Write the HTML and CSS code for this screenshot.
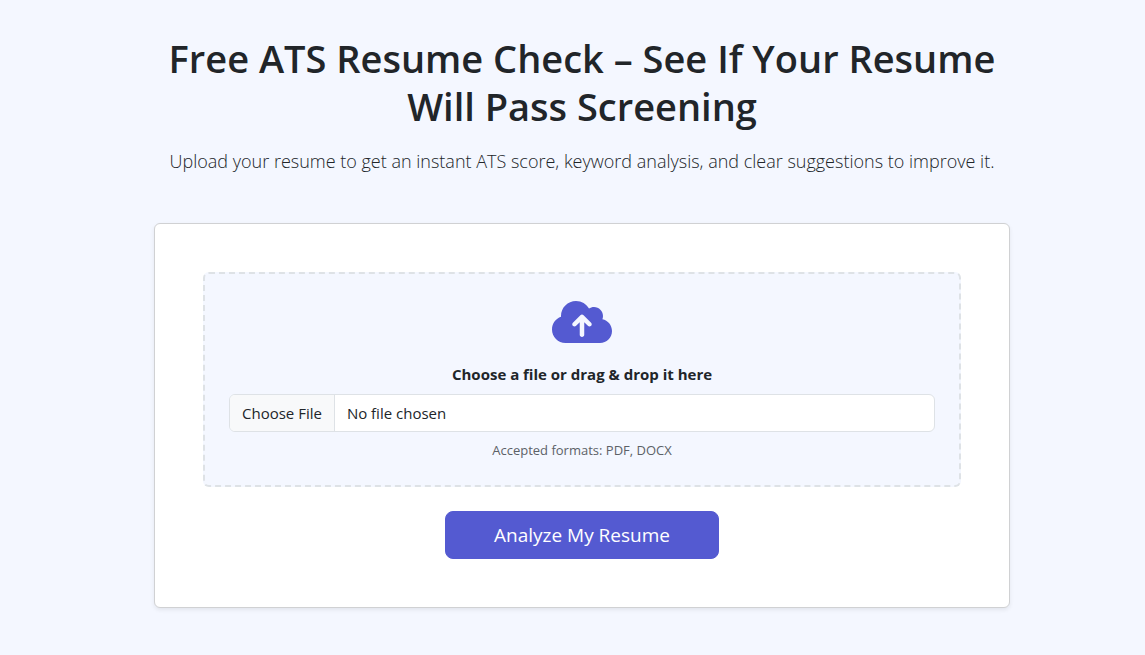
FILE: index.html
```html
<!DOCTYPE html>
<html lang="en">
  <head>
    <meta charset="UTF-8" />
    <meta name="viewport" content="width=device-width, initial-scale=1.0" />
    <title>Free ATS Resume Check</title>
    <link rel="stylesheet" href="styles.css">
  </head>
  <body>
    <main class="container">
      <header class="intro">
        <h1>Free ATS Resume Check – See If Your Resume Will Pass Screening</h1>
        <p class="lead">Upload your resume to get an instant ATS score, keyword analysis, and clear suggestions to improve it.</p>
      </header>

      <form class="card">
        <div class="upload-area">
          <svg class="upload-icon" viewBox="0 0 640 512" aria-hidden="true">
            <path d="M144 480C64.5 480 0 415.5 0 336c0-62.8 40.2-116.2 96.2-135.9c-.1-2.7-.2-5.4-.2-8.1c0-88.4 71.6-160 160-160c59.3 0 111 32.2 138.7 80.2C409.9 102 428.3 96 448 96c53 0 96 43 96 96c0 12.2-2.3 23.8-6.4 34.6C596 238.4 640 290.1 640 352c0 70.7-57.3 128-128 128H144zm79-217c-9.4 9.4-9.4 24.6 0 33.9s24.6 9.4 33.9 0l39-39V392c0 13.3 10.7 24 24 24s24-10.7 24-24V257.9l39 39c9.4 9.4 24.6 9.4 33.9 0s9.4-24.6 0-33.9l-80-80c-9.4-9.4-24.6-9.4-33.9 0l-80 80z" />
          </svg>
          <label for="resume-file">Choose a file or drag &amp; drop it here</label>
          <input type="file" id="resume-file" class="file-input" accept=".pdf,.docx" />
          <small>Accepted formats: PDF, DOCX</small>
        </div>
        <button type="submit" class="analyze-btn">Analyze My Resume</button>
      </form>
    </main>
  </body>
</html>
```
FILE: styles.css
```css
* {
  box-sizing: border-box;
}

body {
  margin: 0;
  padding: 34px 16px 47px 35px;
  background-color: #f4f7ff;
  color: #212529;
  font-family: "Segoe UI", "Open Sans", "Noto Sans", sans-serif;
  font-size: 15px;
  line-height: 24px;
}

.container {
  max-width: 856px;
  margin: 0 auto;
}

.intro {
  margin-bottom: 47px;
  text-align: center;
}

h1 {
  margin: 0 0 16px;
  font-size: 38px;
  font-weight: 600;
  line-height: 48px;
}

.lead {
  margin: 0;
  font-size: 18px;
  font-weight: 300;
  line-height: 30px;
}

.card {
  display: flex;
  flex-direction: column;
  align-items: center;
  gap: 24px;
  padding: 48px;
  background-color: #fff;
  border: 1px solid #d0d1d3;
  border-radius: 6px;
  box-shadow: 0 2px 4px rgba(0, 0, 0, 0.075);
}

.upload-area {
  display: flex;
  flex-direction: column;
  align-items: center;
  width: 100%;
  padding: 24px;
  background-color: #f4f7ff;
  border: 2px dashed #dee2e6;
  border-radius: 6px;
}

.upload-icon {
  width: 60px;
  height: 48px;
  margin-bottom: 16px;
  fill: #545ad1;
}

label {
  margin-bottom: 8px;
  font-weight: 700;
}

.file-input {
  width: 100%;
  height: 38px;
  margin-bottom: 8px;
  padding: 6px 12px;
  overflow: hidden;
  background-color: #fff;
  border: 1px solid #dee2e6;
  border-radius: 6px;
  color: #212529;
  font: inherit;
}

.file-input::file-selector-button {
  margin: -6px 12px -6px -12px;
  padding: 6px 12px;
  background-color: #f8f9fa;
  border: 0 solid #dee2e6;
  border-right-width: 1px;
  color: #212529;
  font: inherit;
}

small {
  color: #5c6167;
  font-size: 13px;
  line-height: 21px;
}

.analyze-btn {
  height: 48px;
  padding: 8px 48px;
  background-color: #545ad1;
  border: 1px solid #545ad1;
  border-radius: 8px;
  color: #fff;
  font-family: inherit;
  font-size: 19px;
  line-height: 30px;
  cursor: pointer;
}

.analyze-btn:hover {
  background-color: #454bbd;
}
```
